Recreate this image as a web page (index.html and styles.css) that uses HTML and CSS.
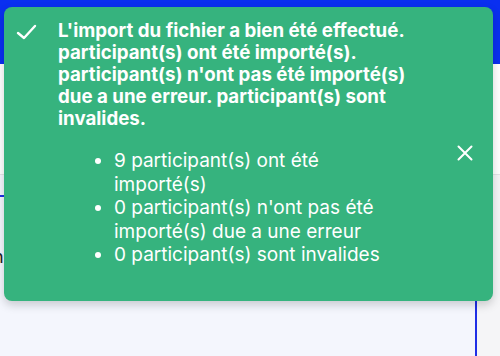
FILE: index.html
```html
<!DOCTYPE html>
<html lang="fr">
<head>
<meta charset="utf-8">
<link rel="stylesheet" href="styles.css">
</head>
<body>
<div class="page">
  <header class="topbar"></header>
  <div class="subbar"></div>
  <main class="main">
    <section class="card">
      <div class="tab-line"></div>
      <div class="cut-text">n</div>
    </section>
    <aside class="side"></aside>
  </main>
</div>

<div class="toast" role="alert">
  <svg class="toast-icon" width="24" height="24" viewBox="0 0 24 24" fill="none" stroke="#fff" stroke-width="2.4" stroke-linecap="round" stroke-linejoin="round"><path d="M4 10l6 5 11-12"/></svg>
  <div class="toast-body">
    <p class="toast-title">L'import du fichier a bien été effectué. participant(s) ont été importé(s). participant(s) n'ont pas été importé(s) due a une erreur. participant(s) sont invalides.</p>
    <ul class="toast-list">
      <li>9 participant(s) ont été importé(s)</li>
      <li>0 participant(s) n'ont pas été importé(s) due a une erreur</li>
      <li>0 participant(s) sont invalides</li>
    </ul>
  </div>
  <svg class="toast-close" width="24" height="24" viewBox="0 0 24 24" fill="none" stroke="#fff" stroke-width="2" stroke-linecap="round"><path d="M5.5 5.5l13 13M18.5 5.5l-13 13"/></svg>
</div>
</body>
</html>
```

FILE: styles.css
```css
* { box-sizing: border-box; }
html, body { margin: 0; padding: 0; }
body {
  width: 500px;
  height: 356px;
  overflow: hidden;
  font-family: Inter, "Liberation Sans", sans-serif;
  background: #f4f6fd;
  position: relative;
}
.page { display: flex; flex-direction: column; height: 356px; }
.topbar { height: 64px; background: #0a2ff0; }
.subbar { height: 111px; background: #fff; border-bottom: 1px solid #e4e4e8; }
.main { flex: 1; display: flex; }
.card {
  width: 477px;
  padding-top: 20px;
  border-right: 2px solid #1f2fe6;
}
.tab-line { height: 2px; width: 100%; background: #1f2fe6; }
.cut-text {
  margin-top: 52px;
  margin-left: -7px;
  font-size: 18px;
  color: #222;
  line-height: 16px;
}
.side { flex: 1; background: #f5f5f7; }

.toast {
  position: absolute;
  left: 4px;
  top: 7px;
  width: 489px;
  height: 294px;
  background: #36b37e;
  border-radius: 8px;
  box-shadow: 0 4px 10px rgba(0, 0, 0, 0.18);
  display: flex;
  align-items: center;
  padding: 13px 16px 16px 10px;
  color: #fff;
}
.toast-icon { align-self: flex-start; margin-top: 3px; flex: none; }
.toast-body { flex: 1; margin-left: 20px; margin-right: 40px; align-self: flex-start; }
.toast-title {
  margin: 0;
  font-size: 18.7px;
  font-weight: 700;
  line-height: 22px;
}
.toast-list {
  margin: 19px 0 0;
  padding-left: 56px;
  font-size: 19px;
  line-height: 23.5px;
}
.toast-close { flex: none; }
```
